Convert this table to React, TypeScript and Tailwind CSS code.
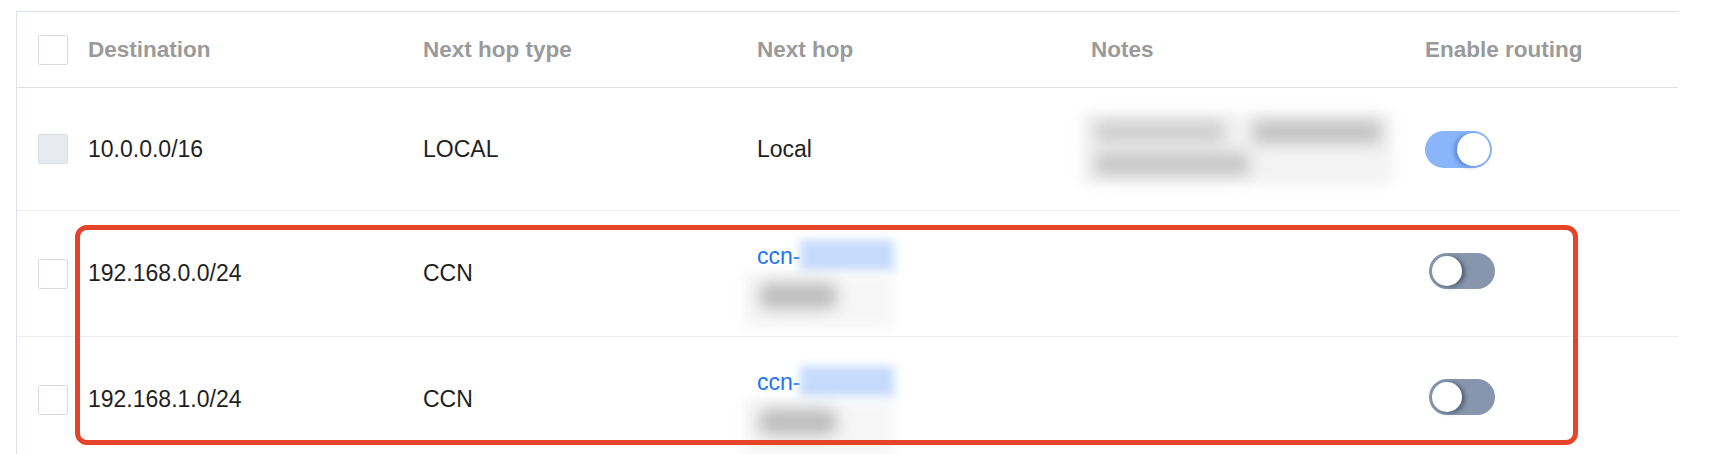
import React from 'react'

type Route = {
  dest: string
  type: string
  hop: 'local' | 'ccn'
  enabled: boolean
  disabled?: boolean
  notes?: boolean
}

const routes: Route[] = [
  { dest: '10.0.0.0/16', type: 'LOCAL', hop: 'local', enabled: true, disabled: true, notes: true },
  { dest: '192.168.0.0/24', type: 'CCN', hop: 'ccn', enabled: false },
  { dest: '192.168.1.0/24', type: 'CCN', hop: 'ccn', enabled: false },
]

function Checkbox({ disabled }: { disabled?: boolean }) {
  return (
    <div
      className={
        disabled
          ? 'w-[30px] h-[30px] rounded-[2px] border-[1.5px] border-[#dadee6] bg-[#e7eaef]'
          : 'w-[30px] h-[30px] rounded-[2px] border-[1.5px] border-[#d6dbe4] bg-white'
      }
    />
  )
}

function Toggle({ on }: { on: boolean }) {
  if (on) {
    return (
      <div className="relative w-[67px] h-[37px] rounded-full bg-[#8ab5fb]">
        <div className="absolute right-[2px] top-[2px] w-[33px] h-[33px] rounded-full bg-white shadow-[-3px_1px_4px_rgba(40,80,160,0.45)]" />
      </div>
    )
  }
  return (
    <div className="relative w-[66px] h-[36px] rounded-full bg-[#8796ac]">
      <div className="absolute left-[3px] top-[3px] w-[30px] h-[30px] rounded-full bg-white shadow-[3px_1px_4px_rgba(40,55,80,0.6)]" />
    </div>
  )
}

function CcnHop() {
  return (
    <div className="flex flex-col mt-[21px]">
      <div className="flex items-center h-[34px]">
        <span className="text-[#2174f3]">ccn-</span>
        <div className="w-[94px] h-[32px] bg-[#c6dbfc] blur-[5px]" />
      </div>
      <div className="relative w-[150px] h-[56px] -ml-[14px]">
        <div className="absolute inset-0 bg-[#f6f6f6] blur-[6px]" />
        <div className="absolute left-[16px] top-[10px] w-[78px] h-[26px] rounded-[10px] bg-[#bcbcbc] blur-[8px]" />
      </div>
    </div>
  )
}

function BlurNotes() {
  return (
    <div className="relative -ml-[10px] w-[312px] h-[72px]">
      <div className="absolute inset-0 bg-[#f3f3f3] blur-[6px]" />
      <div className="absolute left-[14px] top-[8px] w-[130px] h-[22px] rounded bg-[#cdcdcd] blur-[8px]" />
      <div className="absolute left-[172px] top-[8px] w-[128px] h-[22px] rounded bg-[#c0c0c0] blur-[8px]" />
      <div className="absolute left-[14px] top-[40px] w-[154px] h-[22px] rounded bg-[#c4c4c4] blur-[8px]" />
    </div>
  )
}

export default function App() {
  return (
    <div className="relative w-[1718px] h-[454px] overflow-hidden bg-white pt-[11px] pl-[16px] font-['Liberation_Sans',Arial,sans-serif] text-[23px]">
      <div className="w-[1662px] border-t border-l border-[#dde1ea]">
        {/* header */}
        <div className="flex items-center h-[76px] border-b border-[#dde1ea] text-[#9a9a9a] font-bold text-[22.5px]">
          <div className="w-[71px] pl-[21px]">
            <Checkbox />
          </div>
          <div className="w-[335px]">Destination</div>
          <div className="w-[334px]">Next hop type</div>
          <div className="w-[334px]">Next hop</div>
          <div className="w-[334px]">Notes</div>
          <div className="flex-1">Enable routing</div>
        </div>

        {routes.map((r, i) => (
          <div
            key={r.dest}
            className={
              i === 0
                ? 'flex items-center h-[123px] border-b border-[#eceef3] text-[#1f1f1f]'
                : 'flex items-center h-[126px] border-b border-[#eceef3] text-[#1f1f1f]'
            }
          >
            <div className="w-[71px] pl-[21px]">
              <Checkbox disabled={r.disabled} />
            </div>
            <div className="w-[335px]">{r.dest}</div>
            <div className="w-[334px]">{r.type}</div>
            <div className="w-[334px]">{r.hop === 'local' ? 'Local' : <CcnHop />}</div>
            <div className="w-[334px]">{r.notes && <BlurNotes />}</div>
            <div className={r.enabled ? 'flex-1' : 'flex-1 -mt-[6px] pl-[4px]'}>
              <Toggle on={r.enabled} />
            </div>
          </div>
        ))}
      </div>

      {/* annotation box */}
      <div className="absolute left-[75px] top-[225px] w-[1503px] h-[220px] rounded-[12px] border-[5px] border-[#e6432b] pointer-events-none" />
    </div>
  )
}
